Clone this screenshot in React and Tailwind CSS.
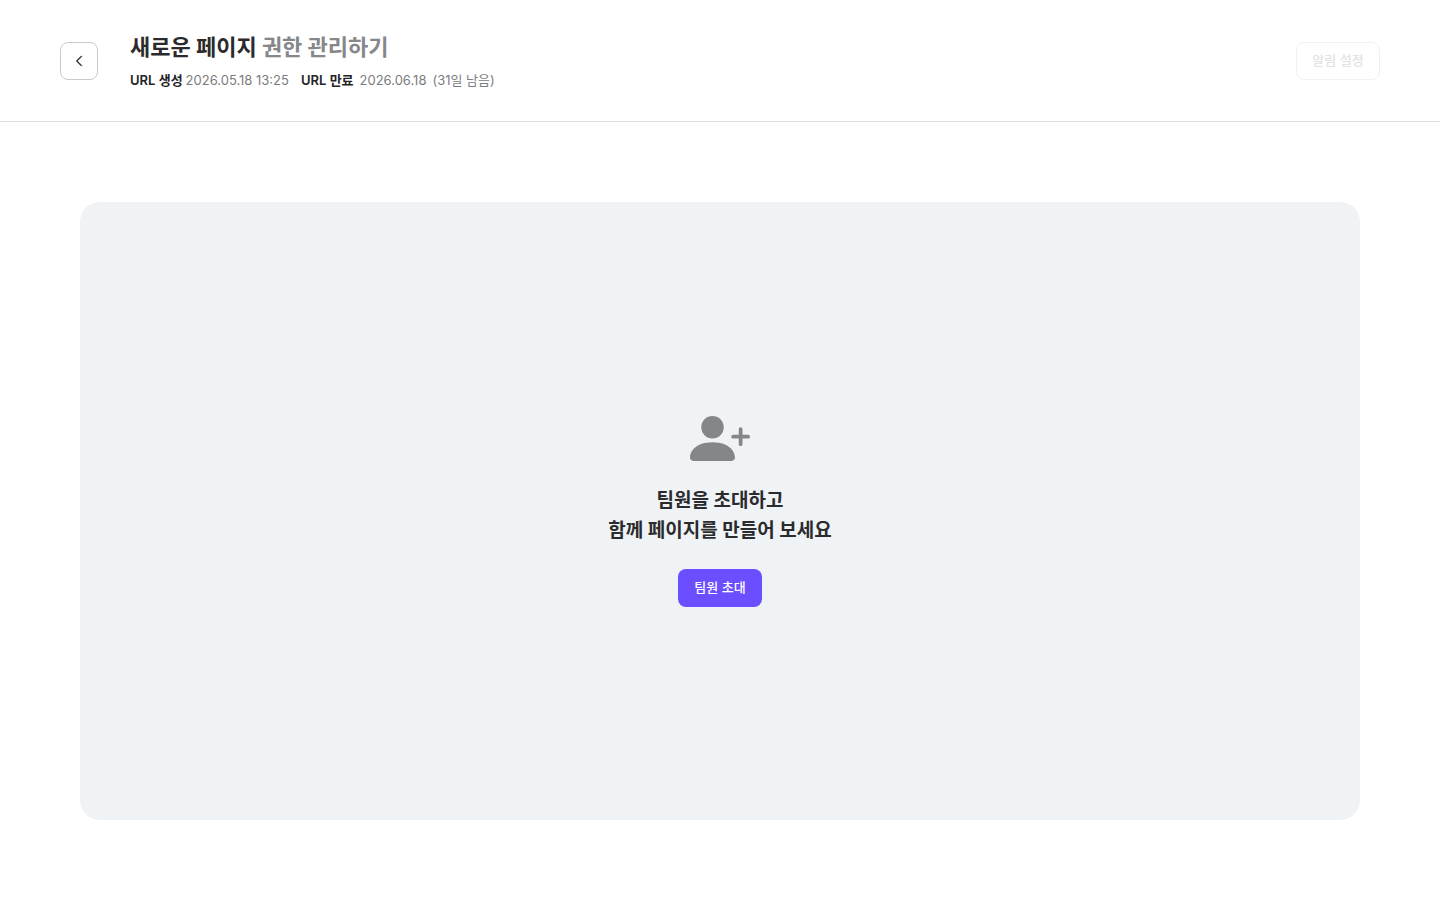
import { BsChevronLeft } from "react-icons/bs";

function PersonPlusIcon({ className }) {
  return (
    <svg viewBox="0 2 16 12" fill="currentColor" aria-hidden="true" className={className}>
      <path d="M1 14s-1 0-1-1 1-4 6-4 6 3 6 4-1 1-1 1zm5-6a3 3 0 1 0 0-6 3 3 0 0 0 0 6" />
      <path
        fillRule="evenodd"
        d="M13.5 5a.5.5 0 0 1 .5.5V7h1.5a.5.5 0 0 1 0 1H14v1.5a.5.5 0 0 1-1 0V8h-1.5a.5.5 0 0 1 0-1H13V5.5a.5.5 0 0 1 .5-.5"
      />
    </svg>
  );
}

function Header() {
  return (
    <header className="flex items-center justify-between border-b border-[#dcdddf] px-[60px] py-[30px]">
      <div className="flex items-center gap-8">
        <button
          type="button"
          aria-label="뒤로 가기"
          className="flex size-[38px] items-center justify-center rounded-lg border border-[#c8cacc] bg-white text-[#2b2b2d]"
        >
          <BsChevronLeft className="size-3" strokeWidth={1} />
        </button>
        <div>
          <h1 className="text-[22px] leading-[34px] font-bold text-[#2b2b2d]">
            새로운 페이지 <span className="text-[#85878a]">권한 관리하기</span>
          </h1>
          <dl className="mt-1.5 flex gap-3 text-[13px] leading-[21px] text-[#7b7d80]">
            <div className="flex gap-[3px]">
              <dt className="font-semibold text-[#232325]">URL 생성</dt>
              <dd>2026.05.18 13:25</dd>
            </div>
            <div className="flex gap-1.5">
              <dt className="font-semibold text-[#232325]">URL 만료</dt>
              <dd>2026.06.18</dd>
              <dd>(31일 남음)</dd>
            </div>
          </dl>
        </div>
      </div>
      <button
        type="button"
        disabled
        className="h-[38px] min-w-21 rounded-lg border border-[#f0f1f2] px-[15px] text-[13px] font-medium text-[#dfe3e3]"
      >
        알림 설정
      </button>
    </header>
  );
}

export default function App() {
  return (
    <div className="flex min-h-screen flex-col bg-white font-['Inter','Noto_Sans_CJK_KR',sans-serif]">
      <Header />
      <main className="flex grow p-20">
        <section className="flex grow flex-col items-center justify-center rounded-[20px] bg-[#eff3f6]">
          <PersonPlusIcon className="h-[45px] w-[60px] text-[#84878a]" />
          <h2 className="mt-[25px] text-center text-[19px] leading-[30px] font-bold text-[#2b2b2d]">
            팀원을 초대하고
            <br />
            함께 페이지를 만들어 보세요
          </h2>
          <button
            type="button"
            className="mt-[23px] h-[38px] min-w-21 rounded-lg bg-[#6b4eff] px-[15px] text-[13px] font-medium text-white"
          >
            팀원 초대
          </button>
        </section>
      </main>
    </div>
  );
}
